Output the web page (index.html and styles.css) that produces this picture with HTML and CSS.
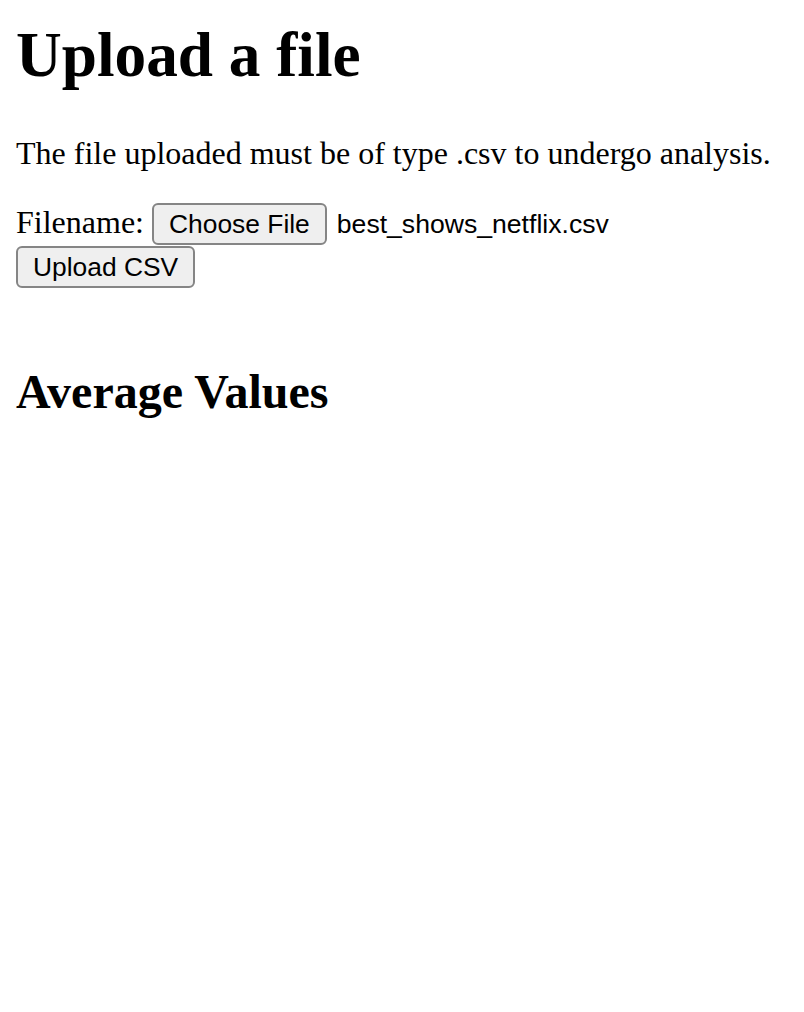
FILE: index.html
```html
<!DOCTYPE html>
<html lang="en">
<head>
<meta charset="utf-8">
<title>Upload a file</title>
<link rel="stylesheet" href="styles.css">
</head>
<body>
<main class="page">
  <h1 class="title">Upload a file</h1>
  <p class="intro">The file uploaded must be of type .csv to undergo analysis.</p>
  <form class="upload-form">
    <div class="file-row">
      <label class="file-label">Filename:</label>
      <button type="button" class="btn">Choose File</button>
      <span class="file-name">best_shows_netflix.csv</span>
    </div>
    <div class="submit-row">
      <button type="button" class="btn">Upload CSV</button>
    </div>
  </form>
  <h2 class="subtitle">Average Values</h2>
</main>
</body>
</html>
```

FILE: styles.css
```css
html, body {
  margin: 0;
  padding: 0;
  background: #ffffff;
}

.page {
  padding: 0 16px;
  font-family: "Liberation Serif", "Times New Roman", serif;
  color: #000000;
}

.title {
  margin: 19px 0 0;
  font-size: 63.3px;
  line-height: 72px;
  font-weight: bold;
}

.intro {
  margin: 44px 0 0;
  font-size: 32px;
  line-height: 36px;
}

.upload-form {
  margin-top: 32px;
}

.file-row {
  display: flex;
  align-items: baseline;
  height: 42px;
}

.file-label {
  font-size: 32px;
  margin-right: 8px;
}

.file-name {
  font-family: "Liberation Sans", Arial, sans-serif;
  font-size: 26.6px;
  margin-left: 10px;
}

.submit-row {
  display: flex;
  margin-top: 1px;
}

.btn {
  box-sizing: border-box;
  height: 42px;
  padding: 0 15px;
  border: 2px solid #858585;
  border-radius: 6px;
  background: #efefef;
  color: #000000;
  font-family: "Liberation Sans", Arial, sans-serif;
  font-size: 26.4px;
  line-height: 30px;
}

.subtitle {
  margin: 76px 0 0;
  font-size: 48px;
  line-height: 56px;
  font-weight: bold;
}
```
